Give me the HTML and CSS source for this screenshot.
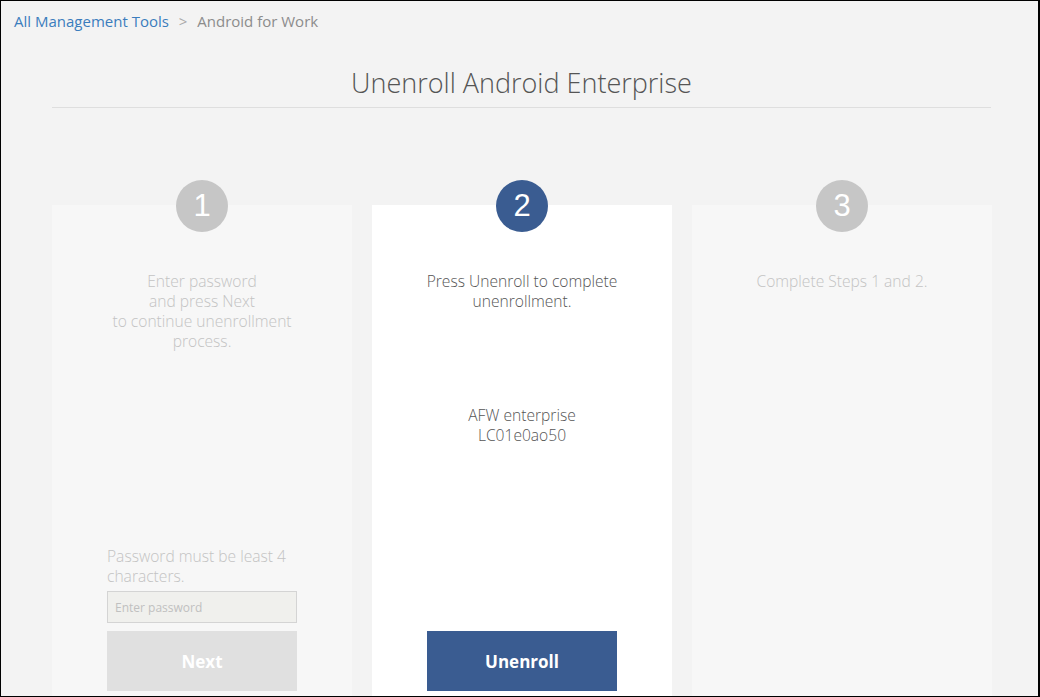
FILE: index.html
```html
<!DOCTYPE html>
<html lang="en">
<head>
<meta charset="utf-8">
<title>Unenroll Android Enterprise</title>
<link rel="stylesheet" href="styles.css">
</head>
<body>
<div class="frame">
  <nav class="breadcrumb">
    <a class="crumb-link" href="#">All Management Tools</a>
    <span class="crumb-sep">&gt;</span>
    <span class="crumb-current">Android for Work</span>
  </nav>
  <header class="page-head">
    <h1 class="page-title">Unenroll Android Enterprise</h1>
  </header>
  <main class="steps">
    <section class="step step-inactive">
      <div class="badge badge-inactive">1</div>
      <p class="step-text">Enter password<br>and press Next<br>to continue unenrollment process.</p>
      <div class="step-foot">
        <p class="hint">Password must be least 4 characters.</p>
        <input class="pw-input" type="password" placeholder="Enter password">
        <button class="btn btn-disabled" type="button">Next</button>
      </div>
    </section>
    <section class="step step-active">
      <div class="badge badge-active">2</div>
      <p class="step-text step-text-active">Press Unenroll to complete unenrollment.</p>
      <p class="enterprise">AFW enterprise<br>LC01e0ao50</p>
      <div class="step-foot">
        <button class="btn btn-primary" type="button">Unenroll</button>
      </div>
    </section>
    <section class="step step-inactive">
      <div class="badge badge-inactive">3</div>
      <p class="step-text">Complete Steps 1 and 2.</p>
    </section>
  </main>
</div>
</body>
</html>
```

FILE: styles.css
```css
* { box-sizing: border-box; }
html, body { margin: 0; padding: 0; }
body {
  background: #f3f3f3;
  font-family: "Open Sans", "Noto Sans", "Liberation Sans", sans-serif;
  overflow: hidden;
}
.frame {
  width: 1040px;
  height: 697px;
  border: 1px solid #000;
  border-right-width: 2px;
  overflow: hidden;
  background: #f3f3f3;
}
.breadcrumb {
  padding: 9px 0 0 13px;
  font-size: 15px;
  font-weight: 400;
  line-height: 22px;
  height: 52px;
}
.crumb-link { color: #3b7dbd; text-decoration: none; }
.crumb-sep { color: #aaa; margin: 0 6px; }
.crumb-current { color: #8c8c8c; }
.page-head {
  margin: 0 47px 0 51px;
  border-bottom: 1px solid #dedede;
  height: 55px;
}
.page-title {
  margin: 0;
  text-align: center;
  font-weight: 300;
  font-size: 27px;
  line-height: 40px;
  padding-top: 10px;
  color: #555;
}
.steps {
  display: grid;
  grid-template-columns: repeat(3, 300px);
  column-gap: 20px;
  margin: 97px 0 0 51px;
}
.step {
  height: 491px;
  padding-bottom: 5px;
  display: flex;
  flex-direction: column;
  align-items: center;
}
.step-inactive { background: #f7f7f7; }
.step-active { background: #fff; }
.badge {
  width: 52px;
  height: 52px;
  border-radius: 50%;
  margin-top: -25px;
  color: #fff;
  font-family: "Liberation Sans", Arial, sans-serif;
  font-size: 31px;
  line-height: 52px;
  text-align: center;
}
.badge-inactive { background: #c6c6c6; }
.badge-active { background: #3a5c91; }
.step-text {
  margin: 39px 0 0;
  padding: 0 48px;
  text-align: center;
  font-size: 15.6px;
  font-weight: 300;
  line-height: 20px;
  color: #c3c3c3;
}
.step-text-active { color: #555; }
.enterprise {
  margin: 94px 0 0;
  text-align: center;
  font-size: 15.6px;
  font-weight: 300;
  line-height: 20px;
  color: #555;
}
.step-foot {
  margin-top: auto;
  width: 190px;
  display: flex;
  flex-direction: column;
}
.hint {
  margin: 0 0 5px;
  font-size: 15.6px;
  font-weight: 300;
  line-height: 20px;
  color: #c3c3c3;
}
.pw-input {
  height: 32px;
  width: 190px;
  background: #f0f0ed;
  border: 1px solid #d4d4d4;
  padding: 0 7px;
  font-family: inherit;
  font-size: 12px;
  color: #555;
  outline: none;
}
.pw-input::placeholder { color: #c0c0c0; }
.btn {
  margin-top: 8px;
  height: 60px;
  width: 190px;
  border: 0;
  font-family: inherit;
  font-size: 17px;
  font-weight: 700;
  color: #fff;
}
.btn-disabled { background: #e0e0e0; }
.btn-primary { background: #3a5c91; }
```
